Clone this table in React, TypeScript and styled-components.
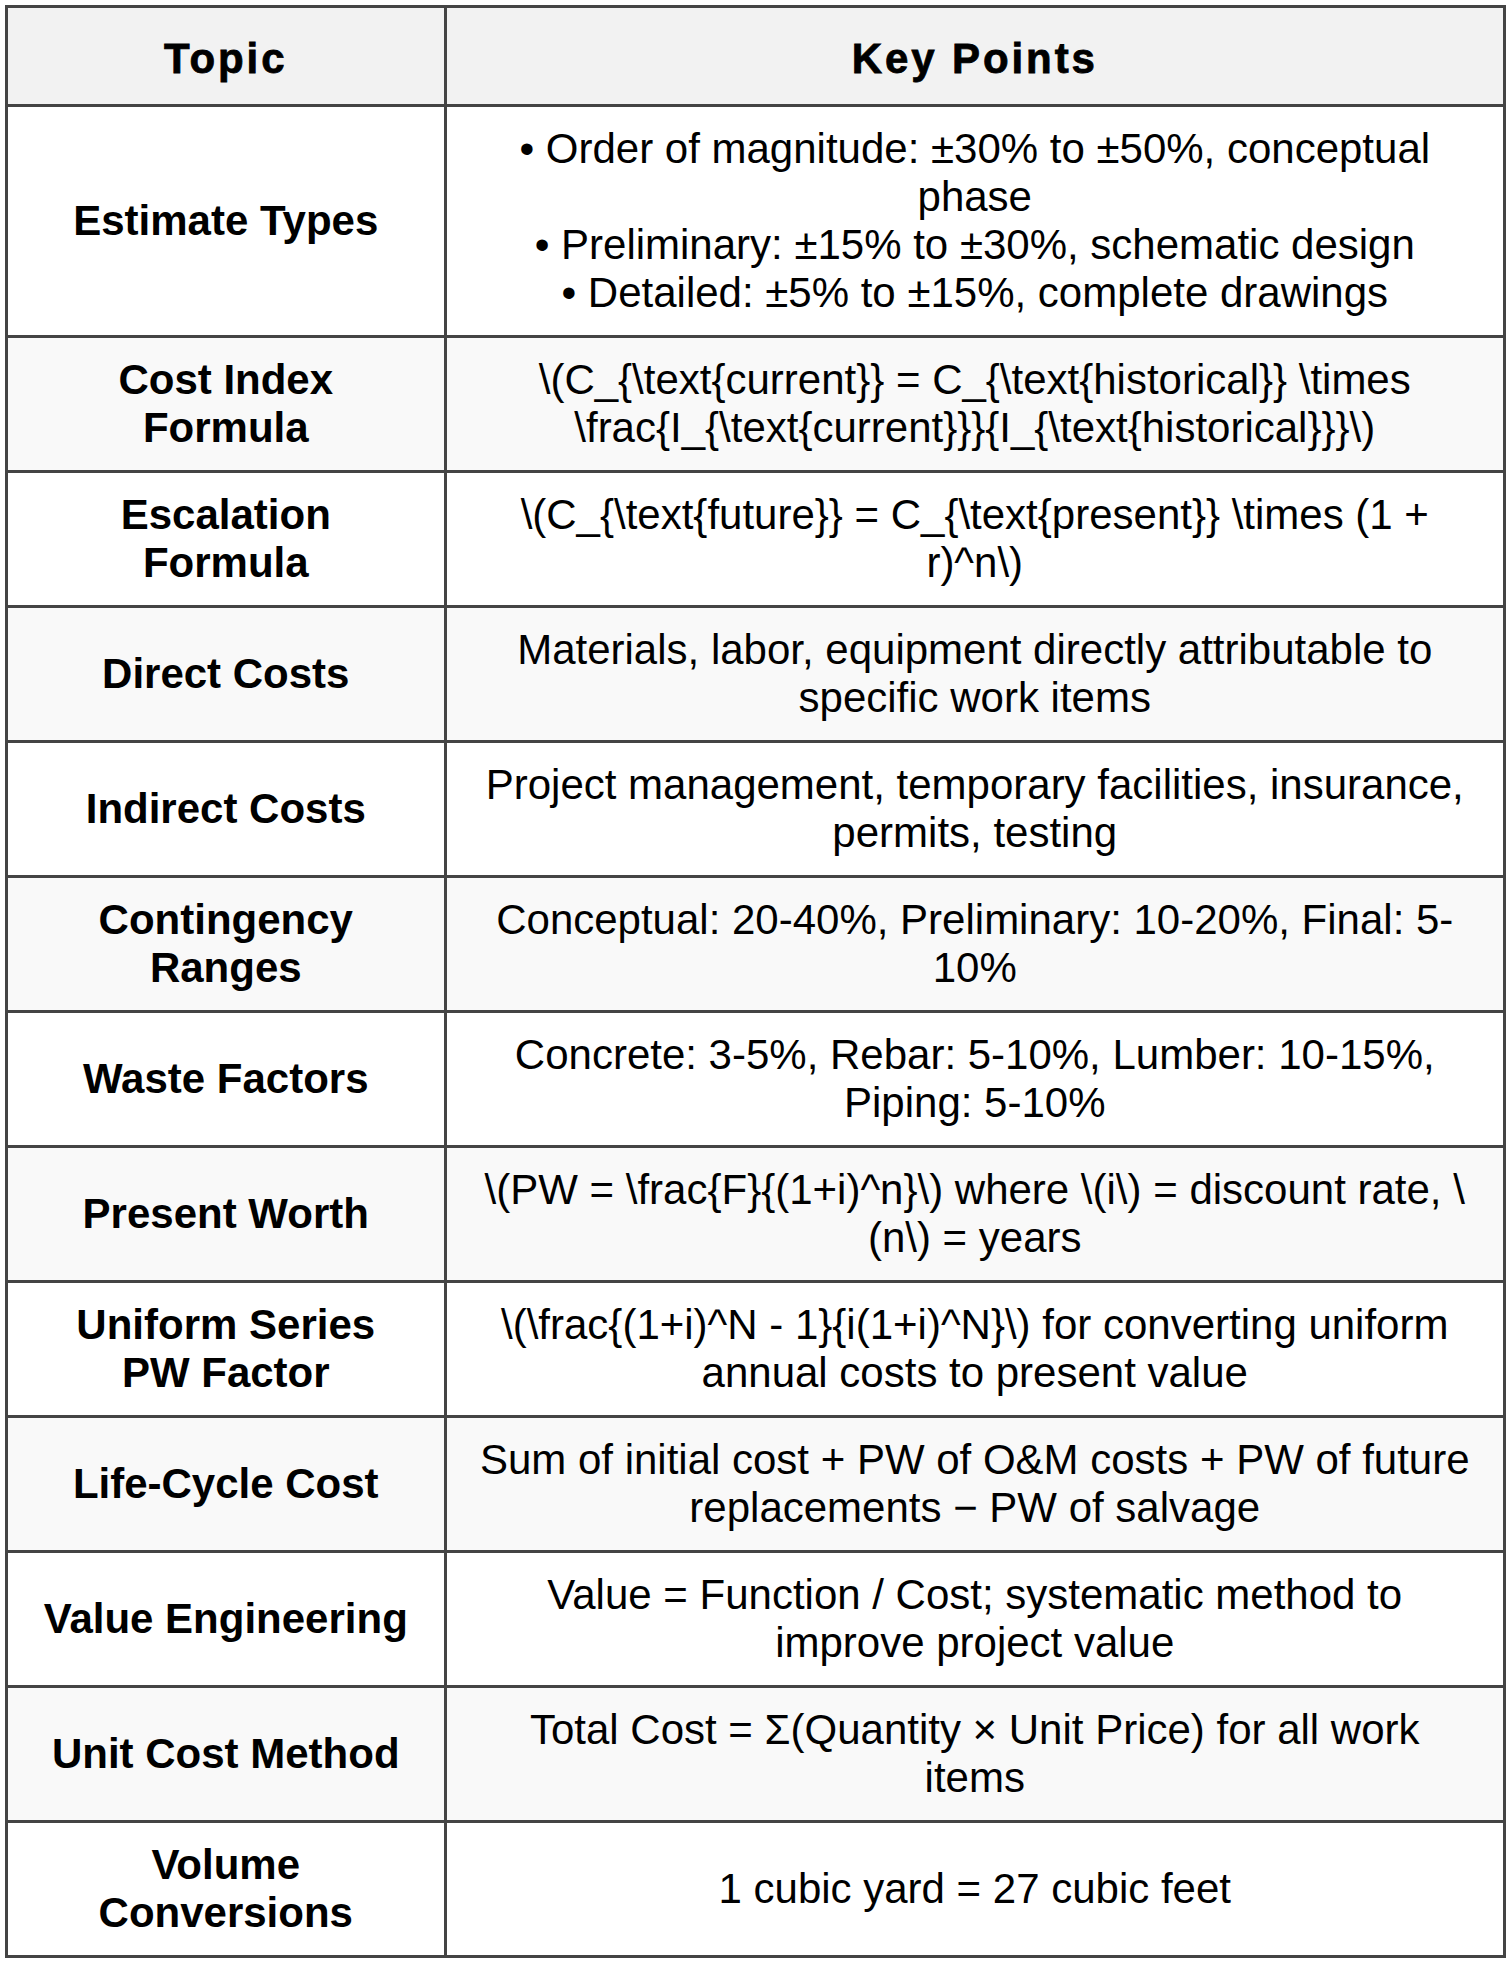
import React from "react";
import styled, { createGlobalStyle } from "styled-components";

const GlobalStyle = createGlobalStyle`
  html, body {
    margin: 0;
    padding: 0;
    background: #ffffff;
  }
  body {
    font-family: "Liberation Sans", Arial, sans-serif;
    color: #000;
  }
`;

const Page = styled.div`
  padding: 5px;
`;

const Table = styled.table`
  width: 1501px;
  table-layout: fixed;
  border-collapse: separate;
  border-spacing: 0;
  border-top: 3px solid #444;
  border-left: 3px solid #444;
  font-family: "Liberation Sans", Arial, sans-serif;
  font-size: 42px;
  line-height: normal;
`;

const HeadCell = styled.th<{ $first?: boolean }>`
  box-sizing: border-box;
  width: ${(p) => (p.$first ? "438.5px" : "auto")};
  padding: 26.5px 6px 21.5px;
  background: #f2f2f2;
  border-right: 3px solid #444;
  border-bottom: 3px solid #444;
  font-weight: 700;
  text-align: center;
  vertical-align: middle;
  letter-spacing: 2.9px;
  -webkit-text-stroke: 0.8px #000;
`;

const Row = styled.tr`
  &:nth-child(even) td {
    background: #f9f9f9;
  }
`;

const TopicCell = styled.td`
  box-sizing: border-box;
  padding: 18px 30px;
  border-right: 3px solid #444;
  border-bottom: 3px solid #444;
  font-weight: 700;
  text-align: center;
  vertical-align: middle;
  background: #fff;
`;

const PointsCell = styled.td`
  box-sizing: border-box;
  padding: 18px 30px;
  border-right: 3px solid #444;
  border-bottom: 3px solid #444;
  font-weight: 400;
  text-align: center;
  vertical-align: middle;
  background: #fff;
`;

const Bullet = styled.div``;

type Item = { topic: string; points: string | string[] };

const items: Item[] = [
  {
    topic: "Estimate Types",
    points: [
      "• Order of magnitude: ±30% to ±50%, conceptual phase",
      "• Preliminary: ±15% to ±30%, schematic design",
      "• Detailed: ±5% to ±15%, complete drawings",
    ],
  },
  {
    topic: "Cost Index Formula",
    points:
      "\\(C_{\\text{current}} = C_{\\text{historical}} \\times \\frac{I_{\\text{current}}}{I_{\\text{historical}}}\\)",
  },
  {
    topic: "Escalation Formula",
    points: "\\(C_{\\text{future}} = C_{\\text{present}} \\times (1 + r)^n\\)",
  },
  {
    topic: "Direct Costs",
    points: "Materials, labor, equipment directly attributable to specific work items",
  },
  {
    topic: "Indirect Costs",
    points: "Project management, temporary facilities, insurance, permits, testing",
  },
  {
    topic: "Contingency Ranges",
    points: "Conceptual: 20-40%, Preliminary: 10-20%, Final: 5-10%",
  },
  {
    topic: "Waste Factors",
    points: "Concrete: 3-5%, Rebar: 5-10%, Lumber: 10-15%, Piping: 5-10%",
  },
  {
    topic: "Present Worth",
    points: "\\(PW = \\frac{F}{(1+i)^n}\\) where \\(i\\) = discount rate, \\(n\\) = years",
  },
  {
    topic: "Uniform Series PW Factor",
    points: "\\(\\frac{(1+i)^N - 1}{i(1+i)^N}\\) for converting uniform annual costs to present value",
  },
  {
    topic: "Life-Cycle Cost",
    points: "Sum of initial cost + PW of O&M costs + PW of future replacements − PW of salvage",
  },
  {
    topic: "Value Engineering",
    points: "Value = Function / Cost; systematic method to improve project value",
  },
  {
    topic: "Unit Cost Method",
    points: "Total Cost = Σ(Quantity × Unit Price) for all work items",
  },
  {
    topic: "Volume Conversions",
    points: "1 cubic yard = 27 cubic feet",
  },
];

export default function App() {
  return (
    <Page>
      <GlobalStyle />
      <Table>
        <thead>
          <tr>
            <HeadCell $first>Topic</HeadCell>
            <HeadCell>Key Points</HeadCell>
          </tr>
        </thead>
        <tbody>
          {items.map((it) => (
            <Row key={it.topic}>
              <TopicCell>{it.topic}</TopicCell>
              <PointsCell>
                {Array.isArray(it.points)
                  ? it.points.map((p) => <Bullet key={p}>{p}</Bullet>)
                  : it.points}
              </PointsCell>
            </Row>
          ))}
        </tbody>
      </Table>
    </Page>
  );
}
